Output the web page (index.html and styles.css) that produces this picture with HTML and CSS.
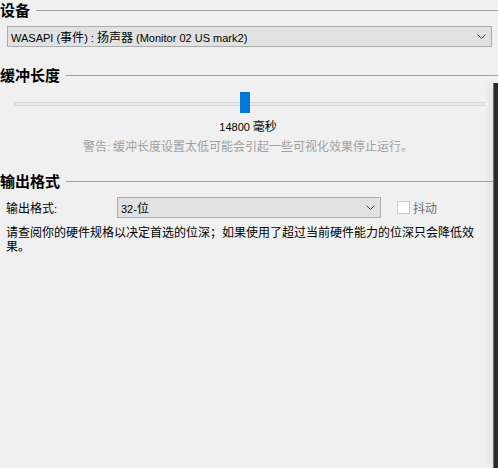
FILE: index.html
```html
<!DOCTYPE html>
<html lang="zh-CN">
<head>
    <meta charset="UTF-8">
    <title>音频设置</title>
    <link rel="stylesheet" href="styles.css">
</head>
<body>
    <div class="panel">
        <div class="group">
            <div class="legend"><span>设备</span></div>
            <div class="combo device">
                <span><span class="latin">WASAPI (</span>事件<span class="latin">) : </span>扬声器<span class="latin"> (Monitor 02 US mark2)</span></span>
                <svg class="chevron" width="9" height="5" viewBox="0 0 9 5"><path d="M0.5 0.5 L4.5 4.5 L8.5 0.5" fill="none" stroke="#404040" stroke-width="1"/></svg>
            </div>
        </div>

        <div class="group buffer">
            <div class="legend"><span>缓冲长度</span></div>
            <div class="slider">
                <div class="track"></div>
                <div class="thumb" style="left: 226px"></div>
            </div>
            <div class="value"><span class="latin">14800</span> 毫秒</div>
            <div class="warning">警告<span class="latin">:</span> 缓冲长度设置太低可能会引起一些可视化效果停止运行。</div>
        </div>

        <div class="group output">
            <div class="legend"><span>输出格式</span></div>
            <div class="format-row">
                <label class="field-label">输出格式<span class="latin">:</span></label>
                <div class="combo format">
                    <span><span class="latin">32-</span>位</span>
                    <svg class="chevron" width="9" height="5" viewBox="0 0 9 5"><path d="M0.5 0.5 L4.5 4.5 L8.5 0.5" fill="none" stroke="#404040" stroke-width="1"/></svg>
                </div>
                <div class="check disabled">
                    <span class="box"></span>
                    <span>抖动</span>
                </div>
            </div>
            <p class="note">请查阅你的硬件规格以决定首选的位深；如果使用了超过当前硬件能力的位深只会降低效果。</p>
        </div>
    </div>

    <div class="window-edge"></div>
</body>
</html>
```

FILE: styles.css
```css
body {
    margin: 0;
    padding: 0;
    background: #f0f0f0;
    font-family: "Noto Sans CJK SC", sans-serif;
    font-size: 12px;
    color: #000;
    width: 498px;
    height: 468px;
    overflow: hidden;
    position: relative;
}

.latin {
    font-family: "Liberation Sans", sans-serif;
    font-size: 11px;
}

.legend {
    display: flex;
    align-items: center;
    height: 20px;
}

.legend span {
    font-size: 15px;
    font-weight: bold;
    line-height: 20px;
}

.legend::after {
    content: "";
    flex: 1;
    border-top: 1px solid #a0a0a0;
    margin-left: 6px;
}

.combo {
    display: flex;
    align-items: center;
    justify-content: space-between;
    box-sizing: border-box;
    height: 21px;
    background: #e1e1e1;
    border: 1px solid #adadad;
    padding: 0 5px 0 3px;
}

.combo.device {
    margin: 6px 0 0 7px;
    width: 485px;
}

.buffer {
    margin-top: 18px;
}

.slider {
    position: relative;
    height: 21px;
    margin: 7px 0 0 14px;
    width: 471px;
}

.track {
    position: absolute;
    left: 0;
    right: 0;
    top: 10px;
    height: 4px;
    box-sizing: border-box;
    background: #e7eae7;
    border: 1px solid #d6d6d6;
}

.thumb {
    position: absolute;
    top: 0;
    width: 10px;
    height: 21px;
    background: #0078d7;
}

.value {
    text-align: center;
    line-height: 16px;
    margin-top: 5px;
    width: 496px;
}

.warning {
    text-align: center;
    line-height: 16px;
    margin-top: 3px;
    width: 496px;
    color: #a0a0a0;
}

.output {
    margin-top: 16px;
}

.format-row {
    display: flex;
    align-items: center;
    margin-top: 6px;
    height: 21px;
}

.field-label {
    width: 111px;
    padding-left: 6px;
}

.combo.format {
    width: 264px;
}

.check {
    display: flex;
    align-items: center;
    margin-left: 16px;
}

.check .box {
    width: 11px;
    height: 11px;
    border: 1px solid #cccccc;
    background: #fff;
    margin-right: 3px;
}

.check.disabled {
    color: #6d6d6d;
}

.note {
    margin: 7px 0 0 6px;
    width: 478px;
    line-height: 14px;
}

.window-edge {
    position: absolute;
    top: 83px;
    left: 493px;
    width: 5px;
    bottom: 0;
    background: #2b2b2b;
    border-left: 1px solid #6e6e6e;
    box-sizing: border-box;
    box-shadow: -3px 0 6px rgba(0, 0, 0, 0.08);
}
```
